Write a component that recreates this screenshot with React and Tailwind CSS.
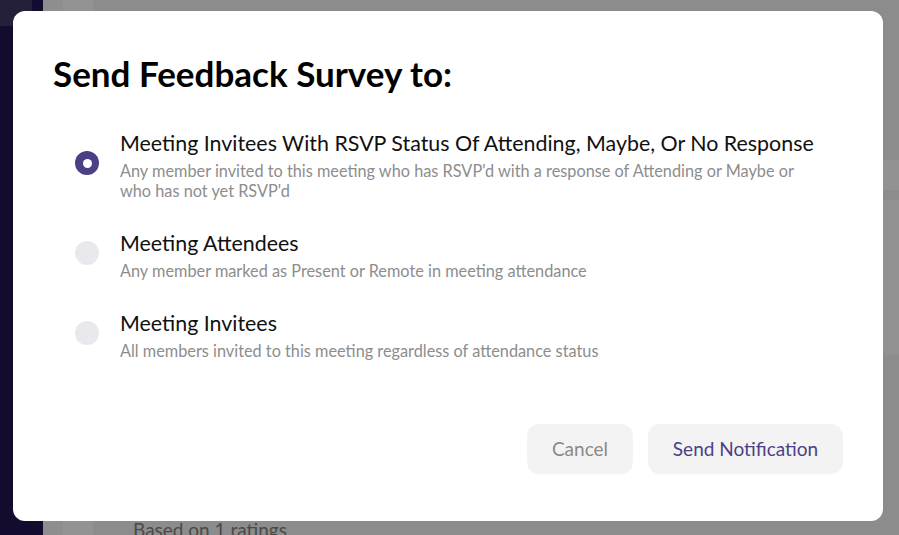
import React from "react";

function Radio({ selected }) {
  if (selected) {
    return (
      <div className="w-6 h-6 rounded-full bg-[#4b3f86] flex items-center justify-center shrink-0">
        <div className="w-[9px] h-[9px] rounded-full bg-white" />
      </div>
    );
  }
  return <div className="w-6 h-6 rounded-full bg-[#e9e9ed] shrink-0" />;
}

function Option({ selected, title, desc }) {
  return (
    <div className="flex items-center">
      <div className="w-[66px] flex justify-center shrink-0">
        <Radio selected={selected} />
      </div>
      <div className="flex flex-col">
        <div className="text-[21.4px] leading-[36px] text-[#111111]">{title}</div>
        <div className="text-[16.3px] leading-[20px] text-[#8d8d8d] max-w-[690px]">{desc}</div>
      </div>
    </div>
  );
}

export default function App() {
  return (
    <div
      className="relative w-[899px] h-[535px] overflow-hidden bg-[#8c8c8c]"
      style={{ fontFamily: "Lato, 'Noto Sans', sans-serif" }}
    >
      {/* background page */}
      <div className="absolute inset-0 flex">
        <div className="w-[43px] h-full bg-[#130c2e] relative">
          <div className="absolute left-0 top-0 w-[32px] h-[26px] bg-[#24203a]" />
        </div>
        <div className="w-[20px] h-full bg-[#8e8e8e]" />
        <div className="w-[30px] h-full bg-[#939393]" />
        <div className="flex-1 h-full relative">
          <div className="absolute left-[40px] top-[516px] text-[19px] text-[#4a4a4a] whitespace-nowrap">Based on 1 ratings</div>
          <div className="absolute right-0 top-[160px] w-[20px] h-[30px] bg-[#929292]" />
          <div className="absolute right-0 top-[200px] w-[20px] h-[155px] bg-[#919191]" />
        </div>
      </div>

      {/* dialog */}
      <div className="absolute left-[13px] top-[11px] w-[870px] h-[510px] bg-white rounded-[12px] flex flex-col">
        <h1 className="pl-[40px] pt-[42px] text-[35px] leading-[40px] font-bold text-black">
          Send Feedback Survey to:
        </h1>
        <div className="flex flex-col gap-[24px] pl-[41px] mt-[32px]">
          <Option
            selected
            title="Meeting Invitees With RSVP Status Of Attending, Maybe, Or No Response"
            desc="Any member invited to this meeting who has RSVP'd with a response of Attending or Maybe or who has not yet RSVP'd"
          />
          <Option
            title="Meeting Attendees"
            desc="Any member marked as Present or Remote in meeting attendance"
          />
          <Option
            title="Meeting Invitees"
            desc="All members invited to this meeting regardless of attendance status"
          />
        </div>
        <div className="flex justify-end gap-[15px] pr-[40px] mt-auto mb-[47px]">
          <button className="w-[106px] h-[50px] rounded-[12px] bg-[#f3f3f3] text-[19px] text-[#8a8a8a]">
            Cancel
          </button>
          <button className="w-[195px] h-[50px] rounded-[12px] bg-[#f3f3f3] text-[19px] text-[#4b3f86]">
            Send Notification
          </button>
        </div>
      </div>
    </div>
  );
}
